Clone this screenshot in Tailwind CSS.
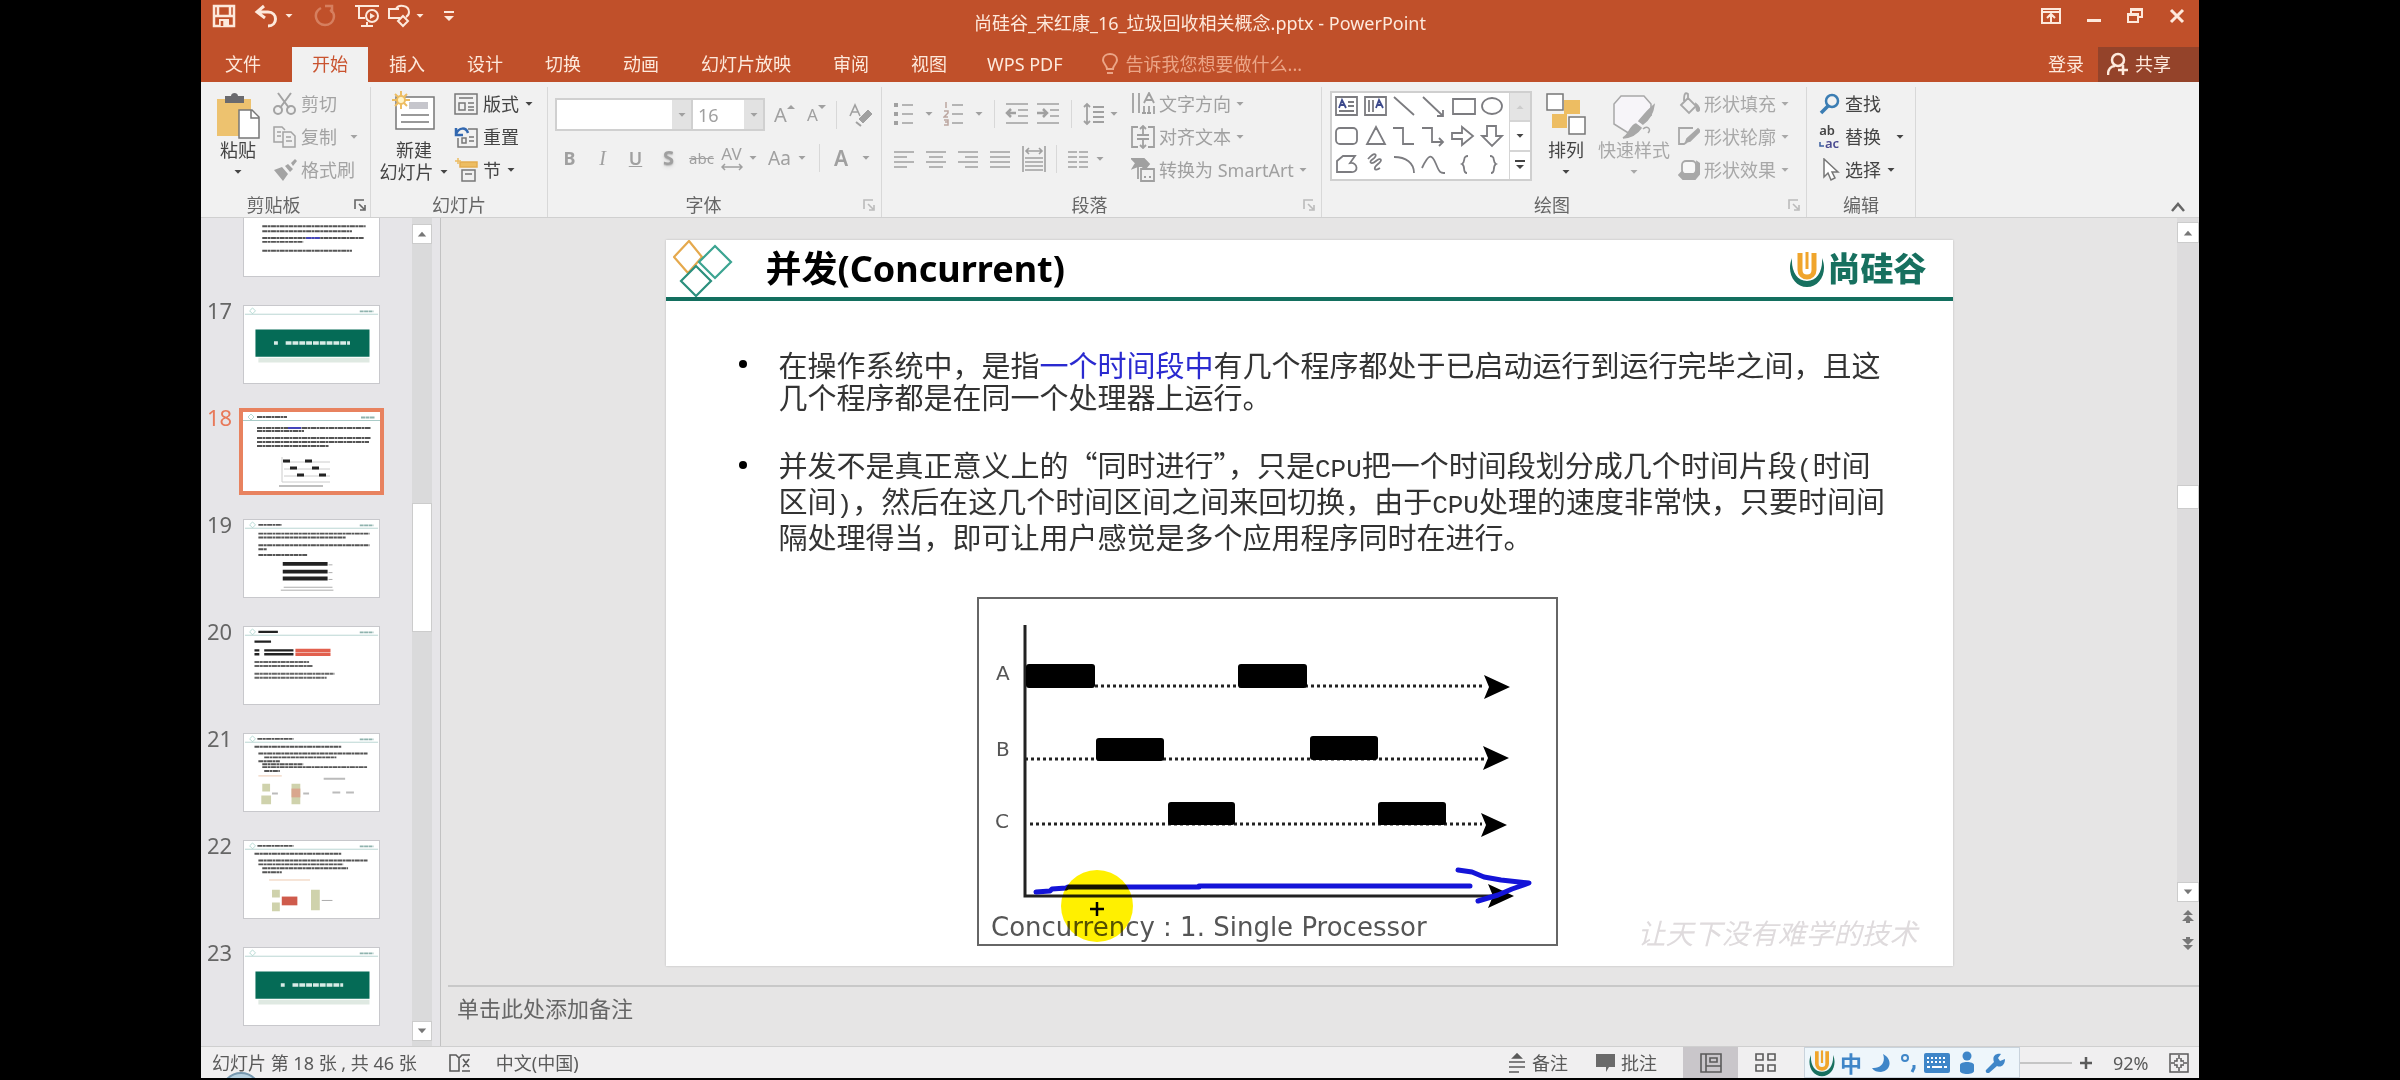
<!DOCTYPE html>
<html lang="zh-CN">
<head>
<meta charset="utf-8">
<title>尚硅谷_宋红康_16_垃圾回收相关概念.pptx - PowerPoint</title>
<script src="https://cdn.jsdelivr.net/npm/@tailwindcss/browser@4"></script>
</head>
<body class="bg-black font-['Noto_Sans','Noto_Sans_CJK_SC',sans-serif] text-lg leading-[22px] text-[#444]">
<svg class="hidden" aria-hidden="true">
  <symbol id="caret" viewBox="0 0 10 6"><path d="M1.500 1h7L5 4.800z" fill="currentColor"/></symbol>
  <symbol id="launch" viewBox="0 0 12 12"><path d="M1 10V1h9M5 5l5 5M11 6v5H6" fill="none" stroke="currentColor" stroke-width="1.600"/></symbol>
  <symbol id="ulogo" viewBox="0 0 36 38"><path d="M3 8C-3 22 5 37 18 37S39 22 33 8c1 13-5 23-15 23S2 21 3 8z" fill="#17705f"/><path d="M11 3v17c0 4 3 7 7 7s7-3 7-7V3" fill="none" stroke="#f0a52c" stroke-width="5"/><path d="M18 2v17" stroke="#f0a52c" stroke-width="3"/></symbol>
  <symbol id="thead" viewBox="0 0 137 9"><path d="M5 5l3-3 3 3-3 3z" fill="none" stroke="#b5dad3"/><path d="M0 8.500h137" stroke="#a9cbc7"/><path d="M118 5.500h14" stroke="#8fb3ae" stroke-width="2" stroke-dasharray="4 .5"/></symbol>
</svg>
<div class="mx-[201px] flex h-screen flex-col overflow-hidden pb-0.5">

  <!-- title bar -->
  <header class="bg-[#c0502a] text-[#fde9dc]">
    <div class="grid h-[47px] grid-cols-[1fr_auto_1fr]">
      <div class="flex h-8 items-center pl-[11px]">
        <button aria-label="保存"><svg class="h-6 w-6" viewBox="0 0 24 24" fill="none" stroke="currentColor" stroke-width="2.500"><path d="M2 2h20v20H2zM3 12h18M6 3v8M18 3v8"/><path d="M7 15h10v7H7z" fill="currentColor" stroke="none"/><path d="M10 17v5" stroke="#c0502a"/></svg></button>
        <button aria-label="撤消" class="ml-[18px]"><svg class="h-6 w-6" viewBox="0 0 24 24" fill="none" stroke="currentColor" stroke-width="3"><path d="M10 2L3 8l8 6M4 8h10c10 0 10 14 0 14"/></svg></button>
        <svg class="ml-[6px] h-1.5 w-[10px]"><use href="#caret"/></svg>
        <button aria-label="重复" class="ml-[19px] text-[#d67f5f]"><svg class="h-6 w-6" viewBox="0 0 24 24" fill="none" stroke="currentColor" stroke-width="2.500"><path d="M8 4c-9 5-5 17 4 17s12-11 5-15M12 2h7v7"/></svg></button>
        <button aria-label="从头开始" class="ml-[18px]"><svg class="h-6 w-6" viewBox="0 0 24 24" fill="none" stroke="currentColor" stroke-width="2"><path d="M0 2h24M4 3v11h6M6 22h12M12 18v4"/><circle cx="17" cy="12" r="6"/><path d="M15 9l5 3-5 3z" fill="currentColor" stroke="none"/></svg></button>
        <button aria-label="形状" class="ml-2"><svg class="h-6 w-6" viewBox="0 0 24 24" fill="none" stroke="currentColor" stroke-width="2"><path d="M13 14H2V5h10M9 5c2-5 13-4 13 3 0 2-1 4-3 5M16 12l5 5-5 5-5-5z"/></svg></button>
        <svg class="ml-[4px] h-1.5 w-[10px]"><use href="#caret"/></svg>
        <svg class="ml-[18px] h-3 w-3" viewBox="0 0 12 12"><path d="M1 1h10v2H1zM1 6h10l-5 5z" fill="currentColor"/></svg>
      </div>
      <h1 class="pt-3 whitespace-nowrap">尚硅谷_宋红康_16_垃圾回收相关概念.pptx - PowerPoint</h1>
      <div class="flex h-8 items-center justify-end gap-[26px] pr-[14px]">
        <button aria-label="功能区显示选项"><svg class="h-4 w-5" viewBox="0 0 20 16" fill="none" stroke="currentColor" stroke-width="2"><path d="M1 1h18v14H1zM2 4h16M10 14V7M6 10l4-4 4 4"/></svg></button>
        <button aria-label="最小化"><svg class="h-4 w-3.5" viewBox="0 0 14 16"><path d="M0 11h14v3H0z" fill="currentColor"/></svg></button>
        <button aria-label="还原"><svg class="h-4 w-4" viewBox="0 0 16 16" fill="none" stroke="currentColor" stroke-width="2"><path d="M1 6h10v8H1zM4 6V1h11v8h-4M1 7h10M4 2h10"/></svg></button>
        <button aria-label="关闭"><svg class="h-4 w-4" viewBox="0 0 16 16" stroke="currentColor" stroke-width="3"><path d="M2 2l12 12M14 2L2 14"/></svg></button>
      </div>
    </div>
    <nav class="flex h-[35px] items-center pb-0.5 whitespace-nowrap">
      <a href="#" class="mr-[10px] ml-[3px] px-[21px]">文件</a>
      <a href="#" class="-mb-0.5 flex h-[35px] items-center bg-[#f1f1f1] px-[20px] pb-0.5 text-[#c9532f]">开始</a>
      <a href="#" class="px-[21px]">插入</a>
      <a href="#" class="px-[21px]">设计</a>
      <a href="#" class="px-[21px]">切换</a>
      <a href="#" class="px-[21px]">动画</a>
      <a href="#" class="px-[21px]">幻灯片放映</a>
      <a href="#" class="px-[21px]">审阅</a>
      <a href="#" class="px-[21px]">视图</a>
      <a href="#" class="px-[19px]">WPS PDF</a>
      <button class="flex items-center gap-2 pl-5 text-[#eba587]"><svg class="h-[22px] w-4" viewBox="0 0 16 22" fill="none" stroke="currentColor" stroke-width="2"><path d="M5 16c0-4-4-5-4-9 0-8 14-8 14 0 0 4-4 5-4 9zM5 20h6"/></svg>告诉我您想要做什么...</button>
      <a href="#" class="ml-auto pr-[14px]">登录</a>
      <button class="-mb-0.5 flex h-[35px] w-[101px] items-center gap-1.5 bg-[#94432a] pb-0.5 pl-[9px]"><svg class="h-6 w-[22px]" viewBox="0 0 22 24" fill="none" stroke="currentColor" stroke-width="2.500"><circle cx="11" cy="8" r="6"/><path d="M1 23c0-6 3-9 7-9M11 18h10M16 13v10"/></svg>共享</button>
    </nav>
  </header>

  <!-- ribbon -->
  <section class="flex h-[136px] shrink-0 border-b border-[#d0d0d0] bg-[#f1f1f1] pt-[5px] whitespace-nowrap">
    <div class="flex w-[170px] flex-col border-r border-[#d8d8d8]">
      <div class="flex h-[106px] pl-[7px]">
        <button class="mr-[5px] flex w-[60px] flex-col items-center pt-1.5">
          <svg class="h-[46px] w-11" viewBox="0 0 44 46"><path d="M1 6h34v37H1z" fill="#edc26f"/><path d="M9 3h6c0-4 7-4 7 0h6v7H9z" fill="#6a6a6e"/><path d="M23 17h13l7 7v21H23z" fill="#fff" stroke="#777" stroke-width="1.500"/><path d="M35 17v8h8" fill="none" stroke="#777" stroke-width="1.500"/></svg>
          <span>粘贴</span><svg class="mt-2 h-1.5 w-[10px]"><use href="#caret"/></svg>
        </button>
        <div class="text-[#a3a3a3]">
          <button class="flex h-[33px] items-center gap-1"><svg class="h-6 w-6" viewBox="0 0 24 24" fill="none" stroke="currentColor" stroke-width="2"><path d="M5 1l11 15M18 1L7 16"/><circle cx="5" cy="18" r="4"/><circle cx="18" cy="18" r="4"/></svg>剪切</button>
          <button class="flex h-[33px] items-center gap-1"><svg class="h-6 w-6" viewBox="0 0 24 24" fill="none" stroke="currentColor" stroke-width="1.500"><path d="M10 17H1V2h8l3 3M10 7h8l4 4v11H10zM4 7h4M4 11h4M13 12h5M13 16h6"/></svg>复制<svg class="ml-2 h-1.5 w-[10px]"><use href="#caret"/></svg></button>
          <button class="flex h-[33px] items-center gap-1"><svg class="h-6 w-6" viewBox="0 0 24 24" fill="currentColor"><path d="M1 12l8-3 6 7-5 7zM12 8l3-2 5 5-3 3zM18 5l4-4 2 2-4 5z"/></svg>格式刷</button>
        </div>
      </div>
      <div class="flex h-6 items-center pr-1 text-[#666]"><span class="flex-1 pr-2 text-center">剪贴板</span><svg class="h-3 w-3"><use href="#launch"/></svg></div>
    </div>

    <div class="flex w-[177px] flex-col border-r border-[#d8d8d8]">
      <div class="flex h-[106px] gap-1 pl-[7px]">
        <button class="flex w-[72px] flex-col items-center pt-1">
          <svg class="h-10 w-11" viewBox="0 0 44 40"><path d="M4 6h38v32H4z" fill="#fff" stroke="#777" stroke-width="1.500"/><path d="M17 11h19v7H17z" fill="#c6c6cc"/><path d="M9 24h28M9 31h28" stroke="#999" stroke-width="2"/><path d="M9 0v18M0 9h18M3 3l12 12M15 3L3 15" stroke="#edbd62" stroke-width="2"/><circle cx="9" cy="9" r="4" fill="#fff4c8" stroke="#edbd62" stroke-width="2"/></svg>
          <span class="mt-2">新建</span><span class="flex items-center gap-[5px]">幻灯片<svg class="h-1.5 w-[10px]"><use href="#caret"/></svg></span>
        </button>
        <div>
          <button class="flex h-[33px] items-center gap-[5px]"><svg class="h-[22px] w-6" viewBox="0 0 24 22" fill="none" stroke="#777" stroke-width="1.500"><path d="M1 1h22v20H1zM5 5h14M5 10h6v7H5zM14 10h6M14 14h6M14 17h6"/></svg>版式<svg class="h-1.5 w-[10px]"><use href="#caret"/></svg></button>
          <button class="flex h-[33px] items-center gap-[5px]"><svg class="h-[22px] w-6" viewBox="0 0 24 22" fill="none" stroke="#777" stroke-width="1.500"><path d="M14 3h9v18H4v-9M8 12h4v5H8zM15 11h5M15 15h5"/><path d="M2 2v7h7M2 8c3-7 10-7 12-1" stroke="#3268b0" stroke-width="2.500"/></svg>重置</button>
          <button class="flex h-[33px] items-center gap-[5px]"><svg class="h-6 w-6" viewBox="0 0 24 24" fill="none" stroke="#777" stroke-width="1.500"><path d="M6 4h17v5H6z" fill="#edbd62" stroke="#e4ad50"/><path d="M1 3h6M4 0v6" stroke="#edbd62"/><path d="M8 12h13v11H8zM11 16h7"/></svg>节<svg class="h-1.5 w-[10px]"><use href="#caret"/></svg></button>
        </div>
      </div>
      <div class="flex h-6 items-center justify-center text-[#666]">幻灯片</div>
    </div>

    <div class="flex w-[334px] flex-col border-r border-[#d8d8d8] text-[#a0a0a0]">
      <div class="h-[106px] pt-[11px] pl-[5px]">
        <div class="flex h-[33px] items-center">
          <div class="ml-0.5 flex h-full w-[138px] border-2 border-[#d0d0d0] bg-white"><input aria-label="字体" class="min-w-0 flex-1"><button aria-label="选择字体" class="grid w-[19px] place-items-center bg-[#e2e2e2]"><svg class="h-1.5 w-[10px]"><use href="#caret"/></svg></button></div>
          <div class="flex h-full w-[72px] border-2 border-l-0 border-[#d0d0d0] bg-white"><input aria-label="字号" value="16" class="min-w-0 flex-1 pl-[5px]"><button aria-label="选择字号" class="grid w-[19px] place-items-center bg-[#e2e2e2]"><svg class="h-1.5 w-[10px]"><use href="#caret"/></svg></button></div>
          <button class="ml-[9px] flex w-5 text-[20px]">A<svg class="h-1.5 w-2 shrink-0" viewBox="0 0 8 6"><path d="M0 5l4-4 4 4z" fill="currentColor"/></svg></button>
          <button class="ml-[13px] flex w-5 items-end text-[17px]">A<svg class="mb-4 h-1.5 w-2 shrink-0" viewBox="0 0 8 6"><path d="M0 1l4 4 4-4z" fill="currentColor"/></svg></button>
          <span class="ml-[9px] h-7 w-px bg-[#d8d8d8]"></span>
          <button aria-label="清除格式" class="ml-3"><svg class="h-6 w-6" viewBox="0 0 24 24" fill="none" stroke="currentColor" stroke-width="2"><path d="M1 13L6 2l5 11M3 9h6" stroke-width="1.600"/><path d="M10 16l9-9 4 4-9 9z" fill="currentColor" stroke-width="1"/><path d="M7 19l5 4"/></svg></button>
        </div>
        <div class="mt-[10px] flex h-[33px] items-center">
          <button class="w-[33px] font-bold">B</button>
          <button class="w-[33px] font-['Liberation_Serif',serif] text-[20px] italic">I</button>
          <button class="w-[33px] font-semibold underline">U</button>
          <button class="w-[33px] text-[20px] font-bold text-shadow-md">S</button>
          <button class="w-[33px] text-[15px] line-through">abc</button>
          <button class="flex w-[27px] flex-col items-center text-[17px] leading-[18px]">AV<svg class="h-2 w-[22px]" viewBox="0 0 22 8" fill="none" stroke="currentColor" stroke-width="1.500"><path d="M4 1L1 4l3 3M18 1l3 3-3 3M1 4h20"/></svg></button>
          <svg class="ml-[3px] h-1.5 w-[10px]"><use href="#caret"/></svg>
          <button class="ml-1 w-[35px] text-[19px]">Aa</button>
          <svg class="h-1.5 w-[10px]"><use href="#caret"/></svg>
          <span class="ml-3 h-7 w-px bg-[#d8d8d8]"></span>
          <button class="ml-1.5 w-[30px] text-[21px] font-semibold">A</button>
          <svg class="ml-[5px] h-1.5 w-[10px]"><use href="#caret"/></svg>
        </div>
      </div>
      <div class="flex h-6 items-center pr-1.5"><span class="flex-1 pl-2 pr-3 text-center text-[#666]">字体</span><svg class="h-3 w-3 text-[#bbb]"><use href="#launch"/></svg></div>
    </div>

    <div class="flex w-[440px] flex-col border-r border-[#d8d8d8] text-[#a0a0a0]">
      <div class="flex h-[106px] pl-[11px]">
        <div class="w-[238px] pt-[10px]">
          <div class="flex h-[33px] items-center">
            <button aria-label="项目符号"><svg class="h-6 w-[22px]" viewBox="0 0 22 24" stroke="currentColor" stroke-width="1.600"><path d="M9 3h11M9 12h11M9 21h11"/><path d="M1 3h4M1 12h4M1 21h4" stroke-width="4"/></svg></button>
            <svg class="ml-[9px] h-1.5 w-[10px]"><use href="#caret"/></svg>
            <button aria-label="编号" class="ml-[9px]"><svg class="h-6 w-[22px]" viewBox="0 0 22 24" stroke="currentColor" stroke-width="1.600"><path d="M9 3h11M9 12h11M9 21h11"/><path d="M3 0v6M1 9h4v2l-4 4h4M1 18h4v5H1M2 20h3" fill="none" stroke="#bca6a0" stroke-width="1.500"/></svg></button>
            <svg class="ml-[9px] h-1.5 w-[10px]"><use href="#caret"/></svg>
            <span class="ml-2.5 h-7 w-px bg-[#d8d8d8]"></span>
            <button aria-label="减少缩进" class="ml-2.5"><svg class="h-6 w-6" viewBox="0 0 24 24" fill="none" stroke="currentColor" stroke-width="1.600"><path d="M1 2h22M13 8h10M13 14h10M1 21h22"/><path d="M11 11H2M6 7l-4 4 4 4" stroke-width="2.500"/></svg></button>
            <button aria-label="增加缩进" class="ml-[7px]"><svg class="h-6 w-6" viewBox="0 0 24 24" fill="none" stroke="currentColor" stroke-width="1.600"><path d="M1 2h22M14 8h9M14 14h9M1 21h22"/><path d="M1 11h10M7 7l4 4-4 4" stroke-width="2.500"/></svg></button>
            <span class="ml-[11px] h-7 w-px bg-[#d8d8d8]"></span>
            <button aria-label="行距" class="ml-[11px]"><svg class="h-6 w-[22px]" viewBox="0 0 22 24" fill="none" stroke="currentColor" stroke-width="1.800"><path d="M10 5h11M10 10h11M10 15h11M10 20h11M4 2v20M1 5l3-3 3 3M1 19l3 3 3-3"/></svg></button>
            <svg class="ml-1 h-1.5 w-[10px]"><use href="#caret"/></svg>
          </div>
          <div class="mt-3 flex h-[33px] items-center">
            <button aria-label="左对齐"><svg class="h-5 w-[22px]" viewBox="0 0 22 20" stroke="currentColor" stroke-width="1.600"><path d="M1 3h20M1 8h13M1 13h20M1 18h13"/></svg></button>
            <button aria-label="居中" class="ml-2.5"><svg class="h-5 w-[22px]" viewBox="0 0 22 20" stroke="currentColor" stroke-width="1.600"><path d="M1 3h20M4 8h14M1 13h20M4 18h14"/></svg></button>
            <button aria-label="右对齐" class="ml-2.5"><svg class="h-5 w-[22px]" viewBox="0 0 22 20" stroke="currentColor" stroke-width="1.600"><path d="M1 3h20M8 8h13M1 13h20M8 18h13"/></svg></button>
            <button aria-label="两端对齐" class="ml-2.5"><svg class="h-5 w-[22px]" viewBox="0 0 22 20" stroke="currentColor" stroke-width="1.600"><path d="M1 3h20M1 8h20M1 13h20M1 18h20"/></svg></button>
            <button aria-label="分散对齐" class="ml-2.5"><svg class="h-7 w-[26px]" viewBox="0 0 26 28" fill="none" stroke="currentColor" stroke-width="1.600"><path d="M2 1v26M24 1v26M4 13h18M4 17h18M4 21h18M4 25h18M5 6h16M8 3L5 6l3 3M18 3l3 3-3 3"/></svg></button>
            <span class="ml-[9px] h-7 w-px bg-[#d8d8d8]"></span>
            <button aria-label="分栏" class="ml-2.5"><svg class="h-5 w-[22px]" viewBox="0 0 22 20" stroke="currentColor" stroke-width="1.600"><path d="M1 3h9M12 3h9M1 8h9M12 8h9M1 13h9M12 13h9M1 18h9M12 18h9"/></svg></button>
            <svg class="ml-1.5 h-1.5 w-[10px]"><use href="#caret"/></svg>
          </div>
        </div>
        <div>
          <button class="flex h-[33px] items-center gap-1"><svg class="h-6 w-6" viewBox="0 0 24 24" fill="none" stroke="currentColor" stroke-width="1.800"><path d="M2 1v20M8 1v20M13 14v8M18 14v8M23 14v8M13 11l5-10 5 10M15 8h6M11 21h4M16 21h4"/></svg>文字方向<svg class="h-1.5 w-[10px]"><use href="#caret"/></svg></button>
          <button class="flex h-[33px] items-center gap-1"><svg class="h-6 w-6" viewBox="0 0 24 24" fill="none" stroke="currentColor" stroke-width="1.800"><path d="M7 2H1v20h6M17 2h6v20h-6M12 1v8M9 4l3-3 3 3M12 15v8M9 20l3 3 3-3M6 10h12M6 14h12"/></svg>对齐文本<svg class="h-1.5 w-[10px]"><use href="#caret"/></svg></button>
          <button class="flex h-[33px] items-center gap-1"><svg class="h-6 w-6" viewBox="0 0 24 24" fill="none" stroke="currentColor" stroke-width="1.800"><path d="M1 1h12l5 5-4 5-4-4-8 3 3-5z" fill="currentColor"/><path d="M7 9v12M10 11h13v12H10z" fill="#f1f1f1"/><path d="M13 19h2M18 19h2"/></svg>转换为 SmartArt<svg class="h-1.5 w-[10px]"><use href="#caret"/></svg></button>
        </div>
      </div>
      <div class="flex h-6 items-center pr-1.5"><span class="flex-1 pr-1.5 text-center text-[#666]">段落</span><svg class="h-3 w-3 text-[#bbb]"><use href="#launch"/></svg></div>
    </div>

    <div class="flex w-[485px] flex-col border-r border-[#d8d8d8]">
      <div class="flex h-[106px] pl-2">
        <div class="mt-1 flex h-[90px] w-[202px] border-2 border-[#cfcfcf] bg-white">
          <svg class="h-[86px] w-[177px]" viewBox="0 0 177 86" fill="none" stroke="#7c7c80" stroke-width="1.800">
            <path d="M4 4h21v18H4zM16 9h6M16 13h6M7 18h15M33 4h21v18H33zM37 7v12M41 7v12M62 4l20 18M91 4l20 19M111 17v6h-6M121 6h22v15h-22z"/>
            <path d="M7 15l3-8 4 8M8 12h5M44 15l3-8 4 8M45 12h5" stroke="#3d4a8c"/>
            <ellipse cx="160" cy="13" rx="10" ry="8"/>
            <rect x="4" y="35" width="21" height="16" rx="4"/>
            <path d="M44 34l9 17H35zM61 35h10v16h11M90 35h10v14h11M107 45l4 4-4 4M120 40h10v-6l11 9-11 9v-6h-10zM155 33h9v10h6l-10 10-10-10h5z"/>
            <path d="M5 79V68l6-5h12l-5 7c8-1 9 10 1 9zM36 66c8-9 10-3 5 0s-2 6 3 2 7-1 2 3-4 8 2 4M62 64c12 0 20 6 20 16M90 75c7-15 10-14 14-4s5 9 9 9M136 63c-6 0-2 6-6 8 4 2 0 9 5 9M158 63c6 0 2 6 6 8-4 2 0 9-5 9"/>
          </svg>
          <div class="flex w-[21px] flex-col divide-y-2 divide-[#d5d5d5] border-l border-[#d5d5d5]">
            <button aria-label="向上" class="grid flex-1 place-items-center bg-[#e4e4e4] text-[#ccc]"><svg class="h-1.5 w-[10px] rotate-180"><use href="#caret"/></svg></button>
            <button aria-label="向下" class="grid flex-1 place-items-center"><svg class="h-1.5 w-[10px]"><use href="#caret"/></svg></button>
            <button aria-label="其他" class="grid flex-1 place-items-center"><svg class="h-3 w-3" viewBox="0 0 12 12"><path d="M1 1h10v2H1zM2 6h8l-4 4z" fill="currentColor"/></svg></button>
          </div>
        </div>
        <button class="ml-1 flex w-[60px] flex-col items-center pt-1.5">
          <svg class="h-[42px] w-10" viewBox="0 0 40 42" stroke-width="1.500"><path d="M18 7h16v14H18zM6 21h15v14H6z" fill="#edbd62"/><path d="M1 1h16v16H1zM23 24h16v17H23z" fill="#fff" stroke="#777"/></svg>
          <span class="mt-1">排列</span><svg class="mt-2 h-1.5 w-[10px]"><use href="#caret"/></svg>
        </button>
        <button class="flex w-[76px] flex-col items-center pt-2 text-[#a8a8a8]">
          <svg class="h-11 w-11" viewBox="0 0 44 44" fill="none" stroke="currentColor" stroke-width="1.500"><path d="M18 39L2 29V9l7-8h23l7 8v12" fill="#f7f5f9"/><path d="M42 10c-1 8-4 14-11 19l-4-3C31 21 37 14 42 10zM24 29l5 4c-4 6-9 9-18 10 6-3 7-12 13-14z" fill="currentColor"/><path d="M31 34c4-4 9 0 5 4"/></svg>
          <span>快速样式</span><svg class="mt-2 h-1.5 w-[10px]"><use href="#caret"/></svg>
        </button>
        <div class="ml-1.5 text-[#a8a8a8]">
          <button class="flex h-[33px] items-center gap-1"><svg class="h-6 w-[22px]" viewBox="0 0 22 24" fill="none" stroke="currentColor" stroke-width="1.800"><path d="M3 13l7-7 8 8-7 7zM10 8V2c-3-2-4 0-4 7"/><path d="M18 12c4 3 4 7 2 7s-2-4-2-7z" fill="currentColor"/></svg>形状填充<svg class="h-1.5 w-[10px]"><use href="#caret"/></svg></button>
          <button class="flex h-[33px] items-center gap-1"><svg class="h-6 w-[22px]" viewBox="0 0 22 24" fill="none" stroke="currentColor" stroke-width="1.800"><path d="M15 3H1v16h5l3-2"/><path d="M9 14L20 4l2 2-10 10-4 1z" fill="currentColor"/></svg>形状轮廓<svg class="h-1.5 w-[10px]"><use href="#caret"/></svg></button>
          <button class="flex h-[33px] items-center gap-1"><svg class="h-6 w-[22px]" viewBox="0 0 22 24" fill="none" stroke="currentColor" stroke-width="1.800"><path d="M4 14l-3 3 4 4h12l5-6V6l-3-2v10H5z" fill="currentColor"/><rect x="4" y="3" width="14" height="13" rx="4" fill="#f7f7f7"/></svg>形状效果<svg class="h-1.5 w-[10px]"><use href="#caret"/></svg></button>
        </div>
      </div>
      <div class="flex h-6 items-center pr-1.5"><span class="flex-1 pr-1.5 text-center text-[#666]">绘图</span><svg class="h-3 w-3 text-[#bbb]"><use href="#launch"/></svg></div>
    </div>

    <div class="flex w-[109px] flex-col border-r border-[#d8d8d8]">
      <div class="h-[106px] pl-3">
        <button class="flex h-[33px] items-center gap-1"><svg class="h-[22px] w-[22px]" viewBox="0 0 22 22" fill="none" stroke="#3b7db3" stroke-width="2.500"><circle cx="13" cy="8" r="6"/><path d="M9 13l-7 7" stroke-width="3.500"/></svg>查找</button>
        <button class="flex h-[33px] items-center gap-1"><span class="relative block h-[26px] w-[22px] pr-1.5 text-[13px] leading-[13px] font-semibold">ab<span class="block pl-1.5 text-[#4a4a90]">ac</span><svg class="absolute bottom-0.5 left-0 h-1.5 w-1.5" viewBox="0 0 6 6"><path d="M1 0v4h4" fill="none" stroke="#3b5fa0" stroke-width="1.500"/></svg></span>替换<svg class="ml-2.5 h-1.5 w-[10px]"><use href="#caret"/></svg></button>
        <button class="flex h-[33px] items-center gap-1"><svg class="h-6 w-[22px]" viewBox="0 0 22 24" fill="#fff" stroke="#777" stroke-width="1.500"><path d="M5 1v18l4-4 3 7 4-2-3-6h6z"/></svg>选择<svg class="ml-px h-1.5 w-[10px]"><use href="#caret"/></svg></button>
      </div>
      <div class="flex h-6 items-center justify-center text-[#666]">编辑</div>
    </div>
    <button aria-label="折叠功能区" class="mr-3.5 mb-1 ml-auto self-end"><svg class="h-3 w-3.5" viewBox="0 0 14 12" fill="none" stroke="#666" stroke-width="2.500"><path d="M1 10l6-7 6 7"/></svg></button>
  </section>

  <!-- workspace -->
  <main class="flex min-h-0 flex-1 bg-[#e6e5e5]">
    <aside class="flex w-[240px] shrink-0 overflow-hidden border-r border-[#c2c2c2] bg-[#e6e5e8]">
      <ol class="-mt-[20px] flex w-[211px] flex-col gap-7 pl-[6px] text-[22px] text-[#666]">
        <li class="flex shrink-0"><span class="w-9"></span><svg class="h-[79px] w-[137px] border border-[#c8c8cc] bg-white" viewBox="0 0 137 79" stroke="#555" stroke-width="2" stroke-dasharray="5 .5 3 .5"><path d="M18 28h106M18 33h92M18 40h104M18 44h42M18 53h92"/><path d="M63 40h14" stroke="#44b"/></svg></li>
        <li class="flex shrink-0"><span class="-mt-1.5 w-9">17</span><svg class="h-[79px] w-[137px] border border-[#c8c8cc] bg-white" viewBox="0 0 137 79"><use href="#thead" width="137" height="9"/><path d="M14 53h114v5H14z" fill="#dfe9e2"/><path d="M11 24h117v28H11z" fill="#056b56"/><path d="M30 38h4M42 38h66" stroke="#d8ebe6" stroke-width="3.500" stroke-dasharray="6 1"/></svg></li>
        <li class="flex shrink-0"><span class="-mt-1.5 w-9 text-[#e8795a]">18</span><svg class="h-[79px] w-[137px] bg-white outline-4 outline-[#e8825f]" viewBox="0 0 137 79"><use href="#thead" width="137" height="9"/><path d="M14 5h30M14 16h114M14 19h47M14 26h114M14 30h112M14 34h72" stroke="#555" stroke-width="2" stroke-dasharray="5 .5 3 .5"/><path d="M45 16h13" stroke="#44b" stroke-width="2"/><path d="M39 45v25h48M41 50h46M41 57h46M41 64h46" fill="none" stroke="#ccc"/><path d="M40 49h7M62 49h7M47 56h7M69 56h7M54 63h7M76 63h7" stroke="#222" stroke-width="3"/><path d="M36 74h44" stroke="#aaa" stroke-width="1.500"/></svg></li>
        <li class="flex shrink-0"><span class="-mt-1.5 w-9">19</span><svg class="h-[79px] w-[137px] border border-[#c8c8cc] bg-white" viewBox="0 0 137 79"><use href="#thead" width="137" height="9"/><path d="M14 5h24M14 14h114M14 18h90M14 26h114M14 30h9M14 36h50" stroke="#555" stroke-width="2" stroke-dasharray="5 .5 3 .5"/><path d="M39 45h46M39 53h46M39 60h46" stroke="#222" stroke-width="4"/><path d="M86 46h4M86 54h4M86 61h4M40 69h50M37 72h54" stroke="#aaa"/></svg></li>
        <li class="flex shrink-0"><span class="-mt-1.5 w-9">20</span><svg class="h-[79px] w-[137px] border border-[#c8c8cc] bg-white" viewBox="0 0 137 79"><use href="#thead" width="137" height="9"/><path d="M14 5h20M10 15h17M10 24h5M20 24h30M10 28h5M20 28h30" stroke="#222" stroke-width="2.500"/><path d="M52 24h36M52 28h36" stroke="#e2604e" stroke-width="3.500"/><path d="M10 36h56M10 40h60M10 48h82M10 52h74" stroke="#666" stroke-width="2" stroke-dasharray="5 .5 3 .5"/></svg></li>
        <li class="flex shrink-0"><span class="-mt-1.5 w-9">21</span><svg class="h-[79px] w-[137px] border border-[#c8c8cc] bg-white" viewBox="0 0 137 79"><use href="#thead" width="137" height="9"/><path d="M13 5h37M10 13h89M14 20h112M20 24h74M14 28h22M18 31h42M18 34h108M20 38h16" stroke="#555" stroke-width="2" stroke-dasharray="5 .5 3 .5"/><path d="M14 43h24" stroke="#edc9ae"/><path d="M81 46h22M90 60h8M104 60h8M28 61h6M60 61h6" stroke="#bbb" stroke-width="2"/><path d="M18 51h8v8h-8zM17 63h10v9H17zM48 51h9v21h-9z" fill="#cfd2ac"/><path d="M48 56h9v9h-9z" fill="#d9a78e"/></svg></li>
        <li class="flex shrink-0"><span class="-mt-1.5 w-9">22</span><svg class="h-[79px] w-[137px] border border-[#c8c8cc] bg-white" viewBox="0 0 137 79"><use href="#thead" width="137" height="9"/><path d="M13 5h37M10 13h89M14 20h112M14 24h87M18 28h88M18 32h20" stroke="#555" stroke-width="2" stroke-dasharray="5 .5 3 .5"/><path d="M25 40h42" stroke="#edc9ae"/><path d="M28 50h8v8h-8zM28 63h8v9h-8zM68 50h9v21h-9z" fill="#cfd2ac"/><path d="M38 57h16v9H38z" fill="#cf5b4c"/><path d="M79 61h11" stroke="#aaa"/></svg></li>
        <li class="flex shrink-0"><span class="-mt-1.5 w-9">23</span><svg class="h-[79px] w-[137px] border border-[#c8c8cc] bg-white" viewBox="0 0 137 79"><use href="#thead" width="137" height="9"/><path d="M14 53h114v5H14z" fill="#dfe9e2"/><path d="M11 24h117v28H11z" fill="#056b56"/><path d="M37 38h4M49 38h52" stroke="#d8ebe6" stroke-width="3.500" stroke-dasharray="6 1"/></svg></li>
      </ol>
      <div class="flex w-5 flex-col bg-[#dadadb] pt-1.5 pb-[5px] text-[#777]">
        <button aria-label="向上滚动" class="grid h-5 place-items-center border border-[#ccc] bg-white"><svg class="h-2 w-3 rotate-180"><use href="#caret"/></svg></button>
        <span class="flex-[261]"></span>
        <span class="h-[129px] border border-[#ccc] bg-white"></span>
        <span class="flex-[391]"></span>
        <button aria-label="向下滚动" class="grid h-5 place-items-center border border-[#ccc] bg-white"><svg class="h-2 w-3"><use href="#caret"/></svg></button>
      </div>
    </aside>

    <div class="flex min-w-0 flex-1 flex-col">
      <div class="flex min-h-0 flex-1">
        <div class="min-w-0 flex-1 pt-[22px]">
          <article class="mx-auto w-full max-w-[1287px] bg-white pb-5 text-[#333] shadow-[0_0_2px_#bbb]">
            <div class="flex h-[61px] items-center border-b-4 border-[#136f5f] pr-[26px]">
              <svg class="ml-[7px] h-[57px] w-[60px]" viewBox="0 0 60 57" fill="none" stroke-width="2.200"><path d="M16 1l13 16-14 16L1 17z" stroke="#e5a94d"/><path d="M42 6l16 16-16 16-16-16z" stroke="#3ba491"/><path d="M23 26l15 15-15 15L8 41z" stroke="#2b8f7d" fill="#fff"/></svg>
              <h2 class="ml-[33px] text-[36px] leading-[44px] font-bold text-black">并发(Concurrent)</h2>
              <svg class="ml-auto h-[38px] w-9"><use href="#ulogo"/></svg>
              <span class="ml-[3px] text-[33px] leading-9 font-black text-[#17705f]">尚硅谷</span>
            </div>
            <ul class="mt-[47px] pl-[73px] font-['Noto_Sans_CJK_SC',sans-serif] text-[29px] whitespace-nowrap">
              <li class="flex leading-8"><span class="mt-3 mr-8 h-2 w-2 rounded-full bg-black"></span><p>在操作系统中，是指<span class="text-[#2a2ad0]">一个时间段中</span>有几个程序都处于已启动运行到运行完毕之间，且这<br>几个程序都是在同一个处理器上运行。</p></li>
              <li class="mt-[35px] flex leading-[35px]"><span class="mt-3.5 mr-8 h-2 w-2 rounded-full bg-black"></span><p>并发不是真正意义上的“同时进行”，只是<span class="font-['Liberation_Mono',monospace] text-[26px] leading-none">CPU</span>把一个时间段划分成几个时间片段<span class="font-['Liberation_Mono',monospace] text-[26px] leading-none">(</span>时间<br>区间<span class="font-['Liberation_Mono',monospace] text-[26px] leading-none">)</span>，然后在这几个时间区间之间来回切换，由于<span class="font-['Liberation_Mono',monospace] text-[26px] leading-none">CPU</span>处理的速度非常快，只要时间间<br>隔处理得当，即可让用户感觉是多个应用程序同时在进行。</p></li>
            </ul>
            <div class="mt-[43px] flex items-end pl-[311px]">
              <svg class="h-[349px] w-[581px] shrink-0" viewBox="0 0 581 349" font-family="DejaVu Sans, sans-serif" fill="#555">
                <rect x="1" y="1" width="579" height="347" fill="#fff" stroke="#666" stroke-width="2"/>
                <path d="M48 28v271h470" fill="none" stroke="#222" stroke-width="3"/>
                <path d="M118 89h390M48 162h460M53 227h452" stroke="#222" stroke-width="3" stroke-dasharray="3 3"/>
                <g fill="#000"><rect x="49" y="67" width="69" height="24" rx="3"/><rect x="261" y="67" width="69" height="24" rx="3"/><rect x="119" y="141" width="68" height="23" rx="3"/><rect x="333" y="139" width="68" height="24" rx="3"/><rect x="191" y="205" width="67" height="23" rx="3"/><rect x="401" y="205" width="68" height="23" rx="3"/>
                <path d="M507 78l26 12-26 12 5-12zM506 149l26 12-26 12 5-12zM504 216l26 12-26 12 5-12zM511 287l26 12-26 12 5-12z"/></g>
                <text x="19" y="83" font-size="20">A</text><text x="19" y="159" font-size="20">B</text><text x="18" y="231" font-size="20">C</text>
                <text x="14" y="339" font-size="26">Concurrency : 1. Single Processor</text>
                <path d="M59 295l14-1 2-2 14-1 2-1h131v-1h271M481 273l14 2 12 5 17 3 28 3-17 6-14 6-20 6" fill="none" stroke="#1414d8" stroke-width="5" stroke-linecap="round" stroke-linejoin="round"/>
                <circle cx="120" cy="309" r="36" fill="#fff000" class="mix-blend-multiply"/>
                <path d="M113 312h14M120 305v14" stroke="#000" stroke-width="2.500"/>
              </svg>
              <span class="ml-20 font-['Noto_Sans_CJK_SC',sans-serif] text-[28px] leading-7 whitespace-nowrap text-[#dfdbdd] italic">让天下没有难学的技术</span>
            </div>
          </article>
        </div>
        <div class="flex w-[22px] shrink-0 flex-col bg-[#dddcdd] pt-1 text-[#777]">
          <button aria-label="上滚" class="grid h-[21px] place-items-center border border-[#ccc] bg-white"><svg class="h-2 w-3 rotate-180"><use href="#caret"/></svg></button>
          <span class="flex-[242]"></span>
          <span class="h-6 border border-[#ccc] bg-white"></span>
          <span class="flex-[374]"></span>
          <button aria-label="下滚" class="grid h-5 place-items-center border border-[#ccc] bg-white"><svg class="h-2 w-3"><use href="#caret"/></svg></button>
          <div class="flex h-[83px] flex-col items-center gap-3 bg-[#e6e5e5] pt-2">
            <button aria-label="上一张幻灯片"><svg class="block h-3.5 w-3" viewBox="0 0 12 14" fill="currentColor"><path d="M6 0l5 5H1zM6 5l6 6H0zM4 11h4v2H4z"/></svg></button>
            <button aria-label="下一张幻灯片"><svg class="block h-3.5 w-3" viewBox="0 0 12 14" fill="currentColor"><path d="M6 14l5-5H1zM6 9l6-6H0zM4 1h4v2H4z"/></svg></button>
          </div>
        </div>
      </div>
      <textarea aria-label="备注" placeholder="单击此处添加备注" class="ml-[7px] h-[61px] shrink-0 resize-none border-t-2 border-[#c8c8c8] px-[9px] pt-[7px] text-[22px] leading-7 placeholder:text-[#666]"></textarea>
    </div>
  </main>

  <!-- status bar -->
  <footer class="relative flex h-8 shrink-0 items-center overflow-hidden border-t border-[#cfcfcf] bg-[#f0eff0] whitespace-nowrap text-[#5a5a5a]">
    <span class="pl-[11px]">幻灯片 第 18 张 , 共 46 张</span>
    <svg class="ml-[32px] h-5 w-[22px]" viewBox="0 0 22 20" fill="none" stroke="currentColor" stroke-width="1.600"><path d="M10 18H1V2h6l3 3zM10 5l3-3h8M13 18h8M14 6l6 8M20 6l-6 8"/></svg>
    <a href="#" class="ml-[25px]">中文(中国)</a>
    <button class="ml-auto flex items-center gap-1.5"><svg class="h-5 w-[18px]" viewBox="0 0 18 20" fill="none" stroke="currentColor" stroke-width="1.600"><path d="M1 9h16M1 14h16M1 19h10"/><path d="M5 5l4-4 4 4z" fill="currentColor"/></svg>备注</button>
    <button class="ml-7 flex items-center gap-1.5"><svg class="h-5 w-[19px]" viewBox="0 0 19 20" fill="#6a6a6a"><path d="M0 1h19v13h-6l-3 5v-5H0z"/></svg>批注</button>
    <button aria-label="普通视图" class="ml-[26px] grid h-full w-[55px] place-items-center bg-[#c9c6ca]"><svg class="h-5 w-[22px]" viewBox="0 0 22 20" fill="none" stroke="currentColor" stroke-width="1.600"><path d="M1 1h20v18H1zM6 1v18M6 13h15M10 5h7v4h-7z"/></svg></button>
    <button aria-label="幻灯片浏览" class="ml-[17px]"><svg class="h-5 w-[22px]" viewBox="0 0 22 20" fill="none" stroke="currentColor" stroke-width="1.600"><path d="M1 1h7v6H1zM13 1h7v6h-7zM1 12h7v6H1zM13 12h7v6h-7z"/></svg></button>
    <div class="ml-[27px] flex h-full w-[216px] items-center border border-[#c9d3dc] bg-[#eef6fb] pl-[3px] text-[#3f86c8]">
      <svg class="h-7 w-7"><use href="#ulogo"/></svg>
      <span class="ml-1 text-[22px] font-bold">中</span>
      <svg class="ml-[9px] h-5 w-5" viewBox="0 0 20 20" fill="currentColor"><path d="M12 1c10 5 8 17-2 18-4 0-7-1-9-4 9 1 14-6 11-14z"/></svg>
      <svg class="ml-2.5 h-5 w-4" viewBox="0 0 16 20" fill="none" stroke="currentColor" stroke-width="2"><circle cx="4" cy="5" r="3"/><path d="M13 12v3l-2 4" stroke-width="3"/></svg>
      <svg class="ml-[7px] h-5 w-[26px]" viewBox="0 0 26 20"><rect width="26" height="20" rx="2" fill="currentColor"/><path d="M3 5h20M3 9h20" stroke="#fff" stroke-width="2" stroke-dasharray="2 2"/><path d="M3 14h20" stroke="#fff" stroke-width="2" stroke-dasharray="3 2 10 2"/></svg>
      <svg class="ml-[9px] h-6 w-4" viewBox="0 0 16 24" fill="currentColor"><circle cx="8" cy="5" r="4.500"/><path d="M1 14c0-4 14-4 14 0v6c0 4-14 4-14 0z"/></svg>
      <svg class="ml-[10px] h-5 w-5" viewBox="0 0 20 20" fill="currentColor"><path d="M1 17L9 9C7 4 10 0 16 1l-3 4 2 3 5-2c0 6-4 9-8 7l-8 7c-2 1-4-1-3-3z"/></svg>
    </div>
    <span class="h-0.5 w-[52px] bg-[#c5c5c5]"></span>
    <button aria-label="放大" class="ml-[7px]"><svg class="h-3.5 w-3.5" viewBox="0 0 14 14" stroke="currentColor" stroke-width="2.500"><path d="M1 7h12M7 1v12"/></svg></button>
    <span class="ml-5 w-[38px]">92%</span>
    <button aria-label="适应窗口" class="mr-2.5 ml-[18px]"><svg class="h-5 w-5" viewBox="0 0 20 20" fill="none" stroke="currentColor" stroke-width="1.500"><path d="M1 1h18v18H1zM10 2v4M10 14v4M2 10h4M14 10h4M5 8h3V5M12 5v3h3M5 12h3v3M15 12h-3v3"/></svg></button>
    <span class="absolute top-[25px] left-5 h-10 w-10 rounded-full border-2 border-[#7799b0] bg-[#b5d0e0]"></span>
  </footer>
</div>
</body>
</html>
